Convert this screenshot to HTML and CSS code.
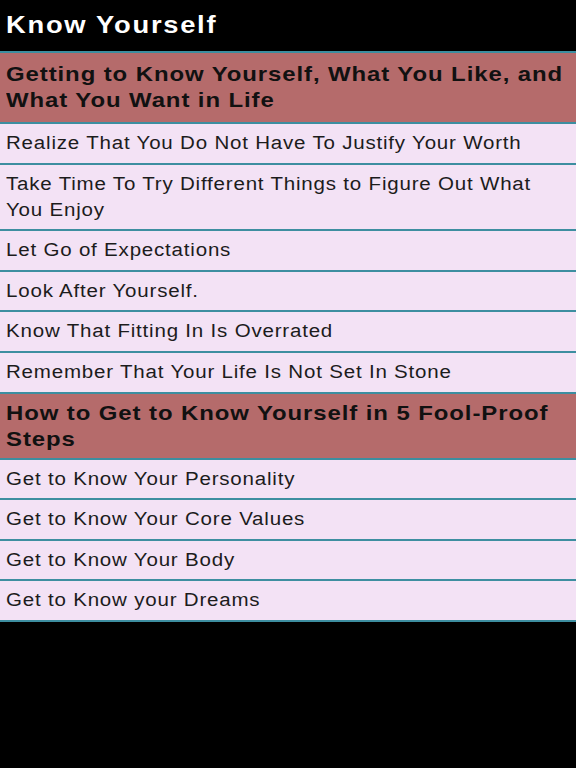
FILE: index.html
```html
<!DOCTYPE html>
<html>
<head>
<meta charset="utf-8">
<link rel="stylesheet" href="styles.css">
</head>
<body>
<div class="app">
  <div class="titlebar"><span class="t">Know Yourself</span></div>
  <div class="list">
    <div class="row head head-first"><span class="t">Getting to Know Yourself, What You Like, and What You Want in Life</span></div>
    <div class="row item"><span class="t">Realize That You Do Not Have To Justify Your Worth</span></div>
    <div class="row item"><span class="t">Take Time To Try Different Things to Figure Out What You Enjoy</span></div>
    <div class="row item"><span class="t">Let Go of Expectations</span></div>
    <div class="row item"><span class="t">Look After Yourself.</span></div>
    <div class="row item"><span class="t">Know That Fitting In Is Overrated</span></div>
    <div class="row item"><span class="t">Remember That Your Life Is Not Set In Stone</span></div>
    <div class="row head"><span class="t">How to Get to Know Yourself in 5 Fool-Proof Steps</span></div>
    <div class="row item"><span class="t">Get to Know Your Personality</span></div>
    <div class="row item"><span class="t">Get to Know Your Core Values</span></div>
    <div class="row item"><span class="t">Get to Know Your Body</span></div>
    <div class="row item"><span class="t">Get to Know your Dreams</span></div>
  </div>
</div>
</body>
</html>
```
FILE: styles.css
```css
html, body {
  margin: 0;
  padding: 0;
  background: #000;
}
.app {
  width: 576px;
  min-height: 768px;
  background: #000;
  font-family: "Liberation Sans", Arial, sans-serif;
}
.t {
  display: block;
  width: calc(100% / 1.14);
  transform: scaleX(1.14);
  transform-origin: 0 0;
}
.titlebar {
  height: 53px;
  box-sizing: border-box;
  padding: 9px 6px 0;
  color: #fff;
  font-weight: bold;
  font-size: 24px;
  line-height: 32px;
  letter-spacing: 1.5px;
  border-bottom: 2px solid #3d8ea0;
}
.list {
  display: flex;
  flex-direction: column;
}
.row {
  border-bottom: 2px solid #3d8ea0;
  padding: 0 10px 0 6px;
}
.head {
  background: #b56b6b;
  color: #111;
  font-weight: bold;
  font-size: 21px;
  line-height: 26px;
  letter-spacing: 0.8px;
  padding-top: 6px;
  padding-bottom: 6px;
}
.head-first {
  padding-top: 8px;
  padding-bottom: 9px;
}
.item {
  background: #f3e2f5;
  color: #1c1c1c;
  font-size: 18px;
  line-height: 26px;
  letter-spacing: 0.7px;
  padding-top: 6px;
  padding-bottom: 6.6px;
}
```
